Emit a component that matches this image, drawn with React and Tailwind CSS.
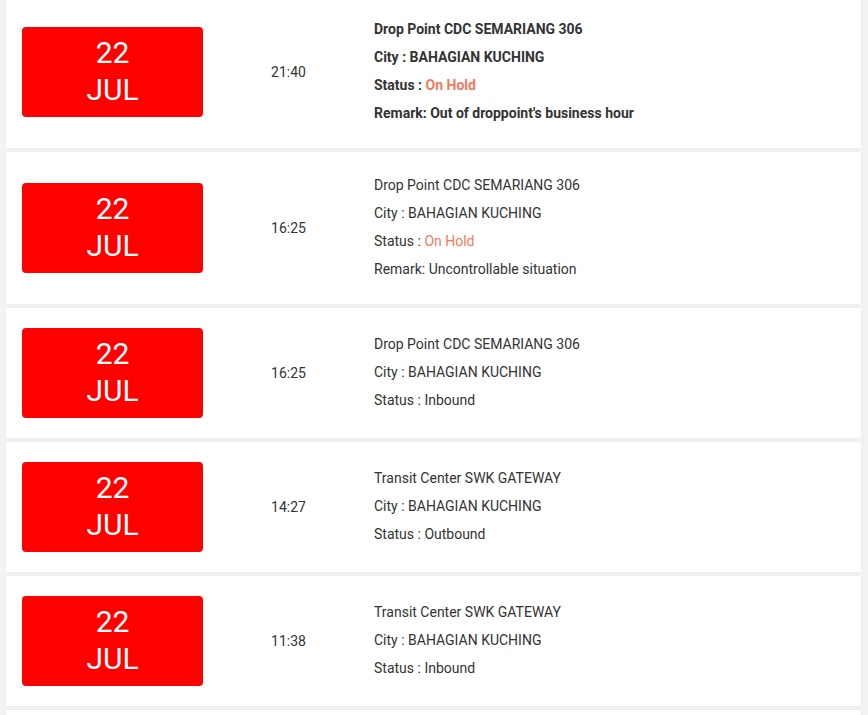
import React from 'react';

const EVENTS = [
  {
    time: '21:40',
    place: 'Drop Point CDC SEMARIANG 306',
    city: 'BAHAGIAN KUCHING',
    status: 'On Hold',
    remark: "Out of droppoint's business hour",
    bold: true,
  },
  {
    time: '16:25',
    place: 'Drop Point CDC SEMARIANG 306',
    city: 'BAHAGIAN KUCHING',
    status: 'On Hold',
    remark: 'Uncontrollable situation',
  },
  { time: '16:25', place: 'Drop Point CDC SEMARIANG 306', city: 'BAHAGIAN KUCHING', status: 'Inbound' },
  { time: '14:27', place: 'Transit Center SWK GATEWAY', city: 'BAHAGIAN KUCHING', status: 'Outbound' },
  { time: '11:38', place: 'Transit Center SWK GATEWAY', city: 'BAHAGIAN KUCHING', status: 'Inbound' },
];

const EventCard = ({ ev }) => {
  const hold = ev.status === 'On Hold';
  return (
    <div className="flex items-center bg-white px-4 py-5 shadow-[0_0_2px_rgba(0,0,0,0.06)]">
      {/* date badge */}
      <div className="flex h-[90px] w-[181px] shrink-0 flex-col items-center justify-center rounded-[4px] bg-[#ff0000] pb-[2px] text-[30px] leading-[37px] text-white">
        <span>22</span>
        <span>JUL</span>
      </div>

      <div className="w-[171px] shrink-0 text-center text-[14px] text-[#333]">{ev.time}</div>

      <div className={`-mt-px mb-px text-[14px] leading-[28px] text-[#333] ${ev.bold ? 'font-bold text-[#222]' : ''}`}>
        <div>{ev.place}</div>
        <div>City : {ev.city}</div>
        <div>
          Status : <span className={hold ? 'text-[#f07a5c]' : ''}>{ev.status}</span>
        </div>
        {ev.remark && <div>Remark: {ev.remark}</div>}
      </div>
    </div>
  );
};

export default function App() {
  return (
    <div className="h-[715px] overflow-hidden bg-[#f3f3f3] font-['Roboto',sans-serif]">
      <div className="-mt-1 flex flex-col gap-1 pl-[6px] pr-[7px]">
        {EVENTS.map((ev, i) => (
          <EventCard key={i} ev={ev} />
        ))}
        {/* next card, cut off by the viewport */}
        <div className="h-10 bg-white shadow-[0_0_2px_rgba(0,0,0,0.06)]" />
      </div>
    </div>
  );
}
